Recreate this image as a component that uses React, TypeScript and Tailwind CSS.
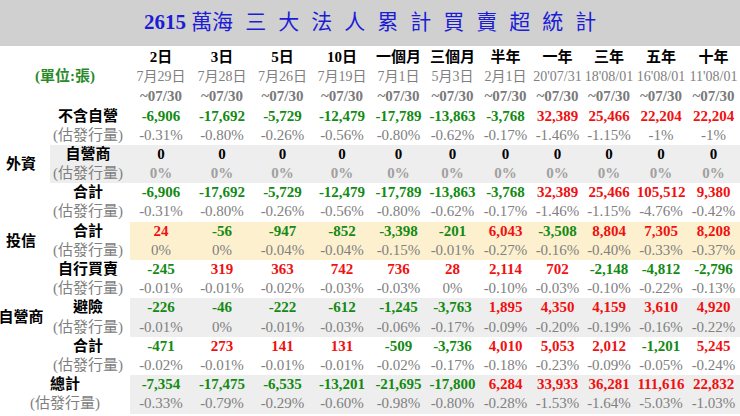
import React from 'react';

type Group = {
  label: string;
  values: string[];
  pcts: string[];
  bg?: string;
  labelBg?: boolean;
  zeroRow?: boolean;
};

const periods = ['2日', '3日', '5日', '10日', '一個月', '三個月', '半年', '一年', '三年', '五年', '十年'];
const starts = ['7月29日', '7月28日', '7月26日', '7月19日', '7月1日', '5月3日', '2月1日', "20'07/31", "18'08/01", "16'08/01", "11'08/01"];

const foreign: Group[] = [
  {
    label: '不含自營',
    values: ['-6,906', '-17,692', '-5,729', '-12,479', '-17,789', '-13,863', '-3,768', '32,389', '25,466', '22,204', '22,204'],
    pcts: ['-0.31%', '-0.80%', '-0.26%', '-0.56%', '-0.80%', '-0.62%', '-0.17%', '-1.46%', '-1.15%', '-1%', '-1%'],
  },
  {
    label: '自營商',
    values: ['0', '0', '0', '0', '0', '0', '0', '0', '0', '0', '0'],
    pcts: ['0%', '0%', '0%', '0%', '0%', '0%', '0%', '0%', '0%', '0%', '0%'],
    bg: 'bg-[#eeeeee]',
    labelBg: true,
    zeroRow: true,
  },
  {
    label: '合計',
    values: ['-6,906', '-17,692', '-5,729', '-12,479', '-17,789', '-13,863', '-3,768', '32,389', '25,466', '105,512', '9,380'],
    pcts: ['-0.31%', '-0.80%', '-0.26%', '-0.56%', '-0.80%', '-0.62%', '-0.17%', '-1.46%', '-1.15%', '-4.76%', '-0.42%'],
  },
];

const trust: Group[] = [
  {
    label: '合計',
    values: ['24', '-56', '-947', '-852', '-3,398', '-201', '6,043', '-3,508', '8,804', '7,305', '8,208'],
    pcts: ['0%', '0%', '-0.04%', '-0.04%', '-0.15%', '-0.01%', '-0.27%', '-0.16%', '-0.40%', '-0.33%', '-0.37%'],
    bg: 'bg-[#fdf0cf]',
  },
];

const dealer: Group[] = [
  {
    label: '自行買賣',
    values: ['-245', '319', '363', '742', '736', '28', '2,114', '702', '-2,148', '-4,812', '-2,796'],
    pcts: ['-0.01%', '-0.01%', '-0.02%', '-0.03%', '-0.03%', '0%', '-0.10%', '-0.03%', '-0.10%', '-0.22%', '-0.13%'],
  },
  {
    label: '避險',
    values: ['-226', '-46', '-222', '-612', '-1,245', '-3,763', '1,895', '4,350', '4,159', '3,610', '4,920'],
    pcts: ['-0.01%', '0%', '-0.01%', '-0.03%', '-0.06%', '-0.17%', '-0.09%', '-0.20%', '-0.19%', '-0.16%', '-0.22%'],
    bg: 'bg-[#eeeeee]',
  },
  {
    label: '合計',
    values: ['-471', '273', '141', '131', '-509', '-3,736', '4,010', '5,053', '2,012', '-1,201', '5,245'],
    pcts: ['-0.02%', '-0.01%', '-0.01%', '-0.01%', '-0.02%', '-0.17%', '-0.18%', '-0.23%', '-0.09%', '-0.05%', '-0.24%'],
  },
];

const total: Group = {
  label: '總計',
  values: ['-7,354', '-17,475', '-6,535', '-13,201', '-21,695', '-17,800', '6,284', '33,933', '36,281', '111,616', '22,832'],
  pcts: ['-0.33%', '-0.79%', '-0.29%', '-0.60%', '-0.98%', '-0.80%', '-0.28%', '-1.53%', '-1.64%', '-5.03%', '-1.03%'],
  bg: 'bg-[#eeeeee]',
};

const dataGrid = 'grid grid-cols-[62px_60px_61px_58px_55px_53px_53px_51px_52px_52px_53px]';
const line = 'h-[19.2px] leading-[19.2px] flex items-center justify-center whitespace-nowrap';

const valueColor = (v: string) => {
  if (v === '0') return 'text-black';
  return v.startsWith('-') ? 'text-[#138a13]' : 'text-[#f01010]';
};

const DataCells: React.FC<{ g: Group }> = ({ g }) => (
  <div className={`${dataGrid} ${g.bg ?? ''}`}>
    {g.values.map((v, i) => (
      <div key={i} className="flex flex-col">
        <div className={`${line} font-bold ${valueColor(v)}`}>{v}</div>
        <div className={`${line} ${g.zeroRow ? 'font-bold text-[#a0a0a0]' : 'text-[#808080]'}`}>{g.pcts[i]}</div>
      </div>
    ))}
  </div>
);

const GroupRow: React.FC<{ g: Group }> = ({ g }) => (
  <div className="flex">
    <div className={`w-[80px] flex flex-col pr-[4px] ${g.labelBg ? g.bg : ''}`}>
      <div className={`${line} font-bold text-black`}>{g.label}</div>
      <div className={`${line} text-[#808080]`}>(估發行量)</div>
    </div>
    <DataCells g={g} />
  </div>
);

const Section: React.FC<{ name: string; groups: Group[] }> = ({ name, groups }) => (
  <div className="flex">
    <div className="w-[50px] flex items-center justify-center pr-[8px] font-bold text-black whitespace-nowrap">{name}</div>
    <div className="flex flex-col">
      {groups.map((g, i) => (
        <GroupRow key={i} g={g} />
      ))}
    </div>
  </div>
);

const titleChars = ['三', '大', '法', '人', '累', '計', '買', '賣', '超', '統', '計'];

export default function App() {
  return (
    <div className="w-[740px] h-[416px] overflow-hidden bg-white text-[15px] font-['Liberation_Serif','Noto_Sans_CJK_TC',serif]">
      {/* title bar */}
      <div className="h-[46px] bg-[#d0d0d0] flex items-center justify-center text-[21px] text-[#1c1cd6]">
        <div className="flex items-center gap-[12px] whitespace-nowrap">
          <span>
            <span className="font-bold">2615</span> 萬海
          </span>
          {titleChars.map((c, i) => (
            <span key={i}>{c}</span>
          ))}
        </div>
      </div>

      {/* header */}
      <div className="flex mt-[1px]">
        <div className="w-[130px] flex flex-col">
          <div className="h-[19.5px]" />
          <div className="h-[19.5px] flex items-center justify-center font-bold text-[#2a8a2a]">(單位:張)</div>
          <div className="h-[19.5px]" />
        </div>
        <div className={dataGrid}>
          {periods.map((p, i) => (
            <div key={i} className="flex flex-col">
              <div className="h-[19.5px] flex items-center justify-center whitespace-nowrap font-bold text-black">{p}</div>
              <div className="h-[19.5px] flex items-center justify-center whitespace-nowrap text-[14px] text-[#808080]">{starts[i]}</div>
              <div className="h-[19.5px] flex items-center justify-center whitespace-nowrap font-bold text-[#7a7a7a]">~07/30</div>
            </div>
          ))}
        </div>
      </div>

      {/* body */}
      <div className="flex flex-col mt-[1px]">
        <Section name="外資" groups={foreign} />
        <Section name="投信" groups={trust} />
        <Section name="自營商" groups={dealer} />
        <div className="flex">
          <div className="w-[130px] flex flex-col">
            <div className={`${line} font-bold text-black`}>{total.label}</div>
            <div className={`${line} text-[#808080]`}>(估發行量)</div>
          </div>
          <DataCells g={total} />
        </div>
      </div>
    </div>
  );
}
